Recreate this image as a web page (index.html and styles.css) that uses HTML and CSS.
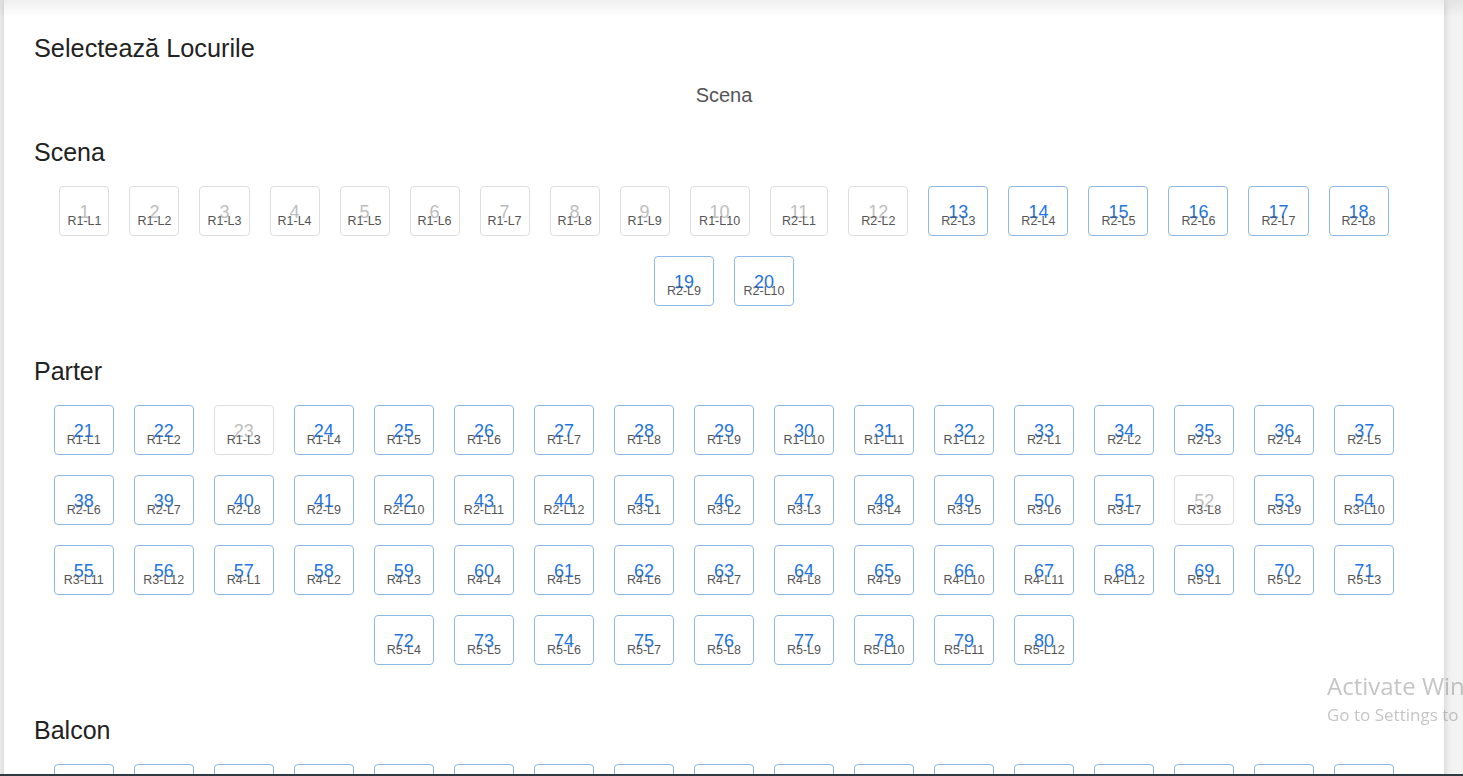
FILE: index.html
```html
<!DOCTYPE html>
<html lang="ro">
<head>
<meta charset="utf-8">
<title>Selectează Locurile</title>
<link rel="stylesheet" href="styles.css">
</head>
<body>
<div class="topshade"></div>
<main class="card">
  <h1 class="title">Selectează Locurile</h1>
  <div class="stage">Scena</div>

  <section class="zone">
    <h2 class="zone-title">Scena</h2>
    <div class="seats">
      <button class="seat taken"><span class="num">1</span><span class="lbl">R1-L1</span></button>
      <button class="seat taken"><span class="num">2</span><span class="lbl">R1-L2</span></button>
      <button class="seat taken"><span class="num">3</span><span class="lbl">R1-L3</span></button>
      <button class="seat taken"><span class="num">4</span><span class="lbl">R1-L4</span></button>
      <button class="seat taken"><span class="num">5</span><span class="lbl">R1-L5</span></button>
      <button class="seat taken"><span class="num">6</span><span class="lbl">R1-L6</span></button>
      <button class="seat taken"><span class="num">7</span><span class="lbl">R1-L7</span></button>
      <button class="seat taken"><span class="num">8</span><span class="lbl">R1-L8</span></button>
      <button class="seat taken"><span class="num">9</span><span class="lbl">R1-L9</span></button>
      <button class="seat taken"><span class="num">10</span><span class="lbl">R1-L10</span></button>
      <button class="seat taken"><span class="num">11</span><span class="lbl">R2-L1</span></button>
      <button class="seat taken"><span class="num">12</span><span class="lbl">R2-L2</span></button>
      <button class="seat"><span class="num">13</span><span class="lbl">R2-L3</span></button>
      <button class="seat"><span class="num">14</span><span class="lbl">R2-L4</span></button>
      <button class="seat"><span class="num">15</span><span class="lbl">R2-L5</span></button>
      <button class="seat"><span class="num">16</span><span class="lbl">R2-L6</span></button>
      <button class="seat"><span class="num">17</span><span class="lbl">R2-L7</span></button>
      <button class="seat"><span class="num">18</span><span class="lbl">R2-L8</span></button>
      <button class="seat"><span class="num">19</span><span class="lbl">R2-L9</span></button>
      <button class="seat"><span class="num">20</span><span class="lbl">R2-L10</span></button>
    </div>
  </section>

  <section class="zone">
    <h2 class="zone-title">Parter</h2>
    <div class="seats">
      <button class="seat"><span class="num">21</span><span class="lbl">R1-L1</span></button>
      <button class="seat"><span class="num">22</span><span class="lbl">R1-L2</span></button>
      <button class="seat taken"><span class="num">23</span><span class="lbl">R1-L3</span></button>
      <button class="seat"><span class="num">24</span><span class="lbl">R1-L4</span></button>
      <button class="seat"><span class="num">25</span><span class="lbl">R1-L5</span></button>
      <button class="seat"><span class="num">26</span><span class="lbl">R1-L6</span></button>
      <button class="seat"><span class="num">27</span><span class="lbl">R1-L7</span></button>
      <button class="seat"><span class="num">28</span><span class="lbl">R1-L8</span></button>
      <button class="seat"><span class="num">29</span><span class="lbl">R1-L9</span></button>
      <button class="seat"><span class="num">30</span><span class="lbl">R1-L10</span></button>
      <button class="seat"><span class="num">31</span><span class="lbl">R1-L11</span></button>
      <button class="seat"><span class="num">32</span><span class="lbl">R1-L12</span></button>
      <button class="seat"><span class="num">33</span><span class="lbl">R2-L1</span></button>
      <button class="seat"><span class="num">34</span><span class="lbl">R2-L2</span></button>
      <button class="seat"><span class="num">35</span><span class="lbl">R2-L3</span></button>
      <button class="seat"><span class="num">36</span><span class="lbl">R2-L4</span></button>
      <button class="seat"><span class="num">37</span><span class="lbl">R2-L5</span></button>
      <button class="seat"><span class="num">38</span><span class="lbl">R2-L6</span></button>
      <button class="seat"><span class="num">39</span><span class="lbl">R2-L7</span></button>
      <button class="seat"><span class="num">40</span><span class="lbl">R2-L8</span></button>
      <button class="seat"><span class="num">41</span><span class="lbl">R2-L9</span></button>
      <button class="seat"><span class="num">42</span><span class="lbl">R2-L10</span></button>
      <button class="seat"><span class="num">43</span><span class="lbl">R2-L11</span></button>
      <button class="seat"><span class="num">44</span><span class="lbl">R2-L12</span></button>
      <button class="seat"><span class="num">45</span><span class="lbl">R3-L1</span></button>
      <button class="seat"><span class="num">46</span><span class="lbl">R3-L2</span></button>
      <button class="seat"><span class="num">47</span><span class="lbl">R3-L3</span></button>
      <button class="seat"><span class="num">48</span><span class="lbl">R3-L4</span></button>
      <button class="seat"><span class="num">49</span><span class="lbl">R3-L5</span></button>
      <button class="seat"><span class="num">50</span><span class="lbl">R3-L6</span></button>
      <button class="seat"><span class="num">51</span><span class="lbl">R3-L7</span></button>
      <button class="seat taken"><span class="num">52</span><span class="lbl">R3-L8</span></button>
      <button class="seat"><span class="num">53</span><span class="lbl">R3-L9</span></button>
      <button class="seat"><span class="num">54</span><span class="lbl">R3-L10</span></button>
      <button class="seat"><span class="num">55</span><span class="lbl">R3-L11</span></button>
      <button class="seat"><span class="num">56</span><span class="lbl">R3-L12</span></button>
      <button class="seat"><span class="num">57</span><span class="lbl">R4-L1</span></button>
      <button class="seat"><span class="num">58</span><span class="lbl">R4-L2</span></button>
      <button class="seat"><span class="num">59</span><span class="lbl">R4-L3</span></button>
      <button class="seat"><span class="num">60</span><span class="lbl">R4-L4</span></button>
      <button class="seat"><span class="num">61</span><span class="lbl">R4-L5</span></button>
      <button class="seat"><span class="num">62</span><span class="lbl">R4-L6</span></button>
      <button class="seat"><span class="num">63</span><span class="lbl">R4-L7</span></button>
      <button class="seat"><span class="num">64</span><span class="lbl">R4-L8</span></button>
      <button class="seat"><span class="num">65</span><span class="lbl">R4-L9</span></button>
      <button class="seat"><span class="num">66</span><span class="lbl">R4-L10</span></button>
      <button class="seat"><span class="num">67</span><span class="lbl">R4-L11</span></button>
      <button class="seat"><span class="num">68</span><span class="lbl">R4-L12</span></button>
      <button class="seat"><span class="num">69</span><span class="lbl">R5-L1</span></button>
      <button class="seat"><span class="num">70</span><span class="lbl">R5-L2</span></button>
      <button class="seat"><span class="num">71</span><span class="lbl">R5-L3</span></button>
      <button class="seat"><span class="num">72</span><span class="lbl">R5-L4</span></button>
      <button class="seat"><span class="num">73</span><span class="lbl">R5-L5</span></button>
      <button class="seat"><span class="num">74</span><span class="lbl">R5-L6</span></button>
      <button class="seat"><span class="num">75</span><span class="lbl">R5-L7</span></button>
      <button class="seat"><span class="num">76</span><span class="lbl">R5-L8</span></button>
      <button class="seat"><span class="num">77</span><span class="lbl">R5-L9</span></button>
      <button class="seat"><span class="num">78</span><span class="lbl">R5-L10</span></button>
      <button class="seat"><span class="num">79</span><span class="lbl">R5-L11</span></button>
      <button class="seat"><span class="num">80</span><span class="lbl">R5-L12</span></button>
    </div>
  </section>

  <section class="zone">
    <h2 class="zone-title">Balcon</h2>
    <div class="seats">
      <button class="seat"><span class="num">81</span><span class="lbl">R1-L1</span></button>
      <button class="seat"><span class="num">82</span><span class="lbl">R1-L2</span></button>
      <button class="seat"><span class="num">83</span><span class="lbl">R1-L3</span></button>
      <button class="seat"><span class="num">84</span><span class="lbl">R1-L4</span></button>
      <button class="seat"><span class="num">85</span><span class="lbl">R1-L5</span></button>
      <button class="seat"><span class="num">86</span><span class="lbl">R1-L6</span></button>
      <button class="seat"><span class="num">87</span><span class="lbl">R1-L7</span></button>
      <button class="seat"><span class="num">88</span><span class="lbl">R1-L8</span></button>
      <button class="seat"><span class="num">89</span><span class="lbl">R1-L9</span></button>
      <button class="seat"><span class="num">90</span><span class="lbl">R1-L10</span></button>
      <button class="seat"><span class="num">91</span><span class="lbl">R2-L1</span></button>
      <button class="seat"><span class="num">92</span><span class="lbl">R2-L2</span></button>
      <button class="seat"><span class="num">93</span><span class="lbl">R2-L3</span></button>
      <button class="seat"><span class="num">94</span><span class="lbl">R2-L4</span></button>
      <button class="seat"><span class="num">95</span><span class="lbl">R2-L5</span></button>
      <button class="seat"><span class="num">96</span><span class="lbl">R2-L6</span></button>
      <button class="seat"><span class="num">97</span><span class="lbl">R2-L7</span></button>
      <button class="seat"><span class="num">98</span><span class="lbl">R2-L8</span></button>
      <button class="seat"><span class="num">99</span><span class="lbl">R2-L9</span></button>
      <button class="seat"><span class="num">100</span><span class="lbl">R2-L10</span></button>
    </div>
  </section>
</main>

<div class="watermark">
  <div class="wm-title">Activate Windows</div>
  <div class="wm-sub">Go to Settings to activate Windows.</div>
</div>
<div class="taskbar-edge"></div>
</body>
</html>
```

FILE: styles.css
```css
html {
  overflow: hidden;
}

body {
  margin: 0;
  background: #f3f3f3;
  font-family: "Liberation Sans", Arial, sans-serif;
  color: #222;
}

.topshade {
  position: fixed;
  top: 0;
  left: 0;
  right: 0;
  height: 18px;
  background: linear-gradient(to bottom, rgba(0, 0, 0, 0.06), rgba(0, 0, 0, 0));
  pointer-events: none;
  z-index: 2;
}

.card {
  margin-left: 4px;
  width: 1440px;
  box-sizing: border-box;
  background: #fff;
  padding: 34px 30px 40px;
  box-shadow: 0 0 8px rgba(0, 0, 0, 0.18);
  min-height: 900px;
}

.title {
  margin: 0;
  font-size: 25.3px;
  line-height: 28px;
  font-weight: 400;
  color: #222;
}

.stage {
  margin: 22px 0 32px;
  text-align: center;
  font-size: 20px;
  line-height: 22px;
  color: #555;
}

.zone + .zone {
  margin-top: 41px;
}

.zone-title {
  margin: 0 0 10px;
  font-size: 25px;
  line-height: 28px;
  font-weight: 400;
  color: #222;
}

.seats {
  display: flex;
  flex-wrap: wrap;
  justify-content: center;
}

.seat {
  position: relative;
  margin: 10px;
  height: 50px;
  padding: 0 19px;
  box-sizing: border-box;
  background: #fff;
  border: 1px solid #8db8e9;
  border-radius: 4px;
  font-family: inherit;
  display: flex;
  align-items: center;
  justify-content: center;
  cursor: pointer;
}

.num {
  font-size: 18px;
  line-height: 20px;
  color: #1e74e0;
  margin-top: 1px;
}

.lbl {
  position: absolute;
  left: 0;
  right: 0;
  bottom: 7px;
  font-size: 12.5px;
  line-height: 14px;
  color: #555;
  text-align: center;
  white-space: nowrap;
}

.seat.taken {
  border-color: #dedede;
  cursor: default;
}

.seat.taken .num {
  color: #bdbdbd;
}

.watermark {
  position: fixed;
  left: 1327px;
  top: 670px;
  white-space: nowrap;
  color: rgba(140, 140, 140, 0.5);
  font-family: "Open Sans", "Noto Sans", sans-serif;
  pointer-events: none;
  z-index: 3;
}

.wm-title {
  font-size: 24px;
  line-height: 31px;
}

.wm-sub {
  font-size: 17px;
  line-height: 27px;
}

.taskbar-edge {
  position: fixed;
  left: 0;
  right: 0;
  bottom: 0;
  height: 2px;
  background: #2e3a42;
  z-index: 4;
}
```
